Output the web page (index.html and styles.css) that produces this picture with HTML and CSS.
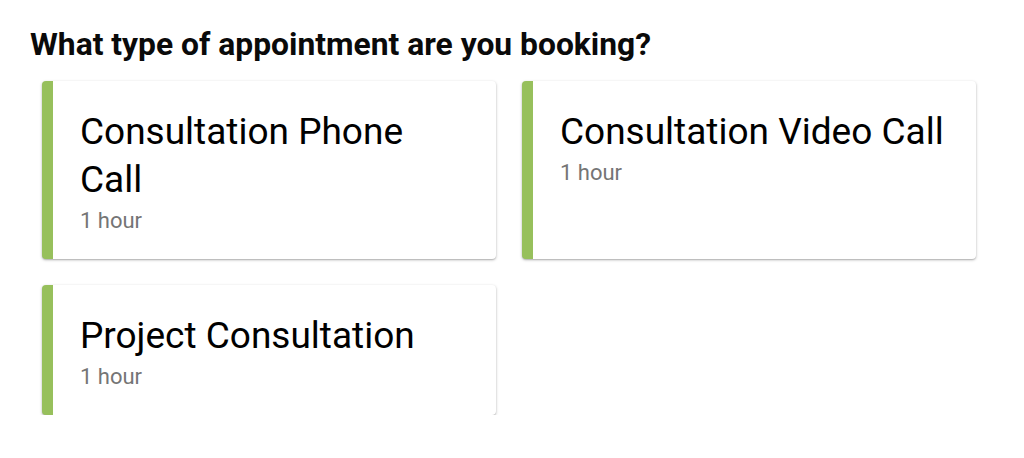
FILE: index.html
```html
<!DOCTYPE html>
<html>
<head>
<meta charset="utf-8">
<link rel="stylesheet" href="styles.css">
</head>
<body>
<div class="page">
  <h1 class="title">What type of appointment are you booking?</h1>
  <div class="grid">
    <div class="card">
      <div class="card-name">Consultation Phone Call</div>
      <div class="card-dur">1 hour</div>
    </div>
    <div class="card">
      <div class="card-name">Consultation Video Call</div>
      <div class="card-dur">1 hour</div>
    </div>
    <div class="card">
      <div class="card-name">Project Consultation</div>
      <div class="card-dur">1 hour</div>
    </div>
  </div>
</div>
</body>
</html>
```

FILE: styles.css
```css
html, body {
  margin: 0;
  padding: 0;
  background: #ffffff;
}
body {
  font-family: Roboto, "Liberation Sans", Arial, sans-serif;
  color: #000;
}
.page {
  padding: 25px 30px 0 30px;
}
.title {
  margin: 0;
  font-size: 31.8px;
  font-weight: 700;
  line-height: 38px;
  color: #0a0a0a;
}
.grid {
  margin: 18px 0 0 12px;
  display: grid;
  grid-template-columns: 454px 454px;
  column-gap: 26px;
  row-gap: 26px;
}
.card {
  background: #fff;
  border-left: 11px solid #97c05c;
  border-radius: 4px;
  box-shadow: 0 1px 3px rgba(0,0,0,0.28), 0 1px 1px rgba(0,0,0,0.1);
  padding: 27px 27px 22px 27px;
}
.card-name {
  font-size: 37px;
  line-height: 48px;
  color: #000;
}
.card-dur {
  font-size: 22px;
  line-height: 33px;
  color: #757575;
}
```
